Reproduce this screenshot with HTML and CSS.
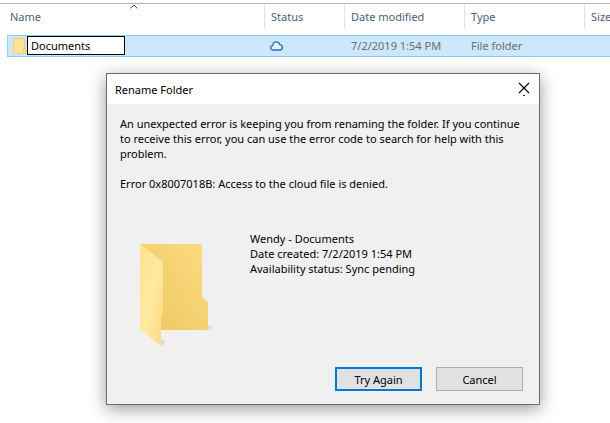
FILE: index.html
```html
<!DOCTYPE html>
<html lang="en">
<head>
    <meta charset="UTF-8">
    <meta name="viewport" content="width=device-width, initial-scale=1.0">
    <title>Rename Folder</title>
    <link rel="stylesheet" href="styles.css">
</head>
<body>
    <!-- File list -->
    <main class="explorer">
        <table class="file-list">
            <thead>
                <tr>
                    <th class="col-name">
                        <div class="heading">Name
                            <svg class="sort-arrow" width="8" height="5" viewBox="0 0 8 5"><path d="M0.5 4.5 L4 1 L7.5 4.5" fill="none" stroke="#555" stroke-width="1"/></svg>
                        </div>
                    </th>
                    <th class="col-status"><div class="heading">Status</div></th>
                    <th class="col-date"><div class="heading">Date modified</div></th>
                    <th class="col-type"><div class="heading">Type</div></th>
                    <th class="col-size"><div class="heading">Size</div></th>
                </tr>
            </thead>
            <tbody>
                <tr class="selected">
                    <td>
                        <div class="file-name">
                            <svg width="14" height="16" viewBox="0 0 14 16">
                                <path d="M1 0 H12 V10 L13 11 V15 H1 Z" fill="#ffe390"/>
                                <path d="M0.5 0.5 H11.5 V10 M0.5 0.5 V15.5 H12.5 V10.5 H10.5 V15" fill="none" stroke="#efcf78" stroke-width="1"/>
                            </svg>
                            <input type="text" class="rename-input" value="Documents" aria-label="Folder name">
                        </div>
                    </td>
                    <td>
                        <svg class="cloud" width="14" height="10" viewBox="0 0 14 10"><path d="M3.4 9 C1.7 9 0.7 8.1 0.7 6.8 C0.7 5.5 1.6 4.7 2.8 4.5 C3 2.3 4.3 0.8 6.3 0.8 C7.9 0.8 9.1 1.8 9.6 3.6 C11.3 3.7 12.3 4.8 12.3 6.3 C12.3 7.9 11.3 9 9.8 9 Z" fill="#e4f2ff" stroke="#1a6fc4" stroke-width="1.3"/></svg>
                    </td>
                    <td>7/2/2019 1:54 PM</td>
                    <td>File folder</td>
                    <td></td>
                </tr>
            </tbody>
        </table>
    </main>

    <!-- Error window -->
    <div class="dialog" role="dialog" aria-labelledby="dialogTitle">
        <header class="title-bar">
            <h1 id="dialogTitle">Rename Folder</h1>
            <button class="close" aria-label="Close">
                <svg width="12" height="15" viewBox="0 0 12 15">
                    <path d="M1 1 L11 11 M11 1 L1 11" fill="none" stroke="#000" stroke-width="1.1"/>
                    <rect x="5" y="13" width="2" height="1" fill="#222"/>
                </svg>
            </button>
        </header>
        <div class="dialog-body">
            <p>An unexpected error is keeping you from renaming the folder. If you continue to receive this error, you can use the error code to search for help with this problem.</p>
            <p>Error 0x8007018B: Access to the cloud file is denied.</p>
            <div class="details">
                <svg class="folder" width="74" height="104" viewBox="0 0 74 104">
                    <defs>
                        <linearGradient id="back" x1="0" y1="1" x2="1" y2="0">
                            <stop offset="0" stop-color="#edc761"/>
                            <stop offset="1" stop-color="#fbdc80"/>
                        </linearGradient>
                        <linearGradient id="front" x1="0" y1="0" x2="1" y2="1">
                            <stop offset="0" stop-color="#ffe28b"/>
                            <stop offset="0.5" stop-color="#ffe8a0"/>
                            <stop offset="1" stop-color="#fbda7c"/>
                        </linearGradient>
                        <filter id="soft"><feGaussianBlur stdDeviation="1"/></filter>
                    </defs>
                    <path d="M20 102 L25 98 L22 95 Z M66 86 L73 83 L68 82 Z" fill="#ccc" filter="url(#soft)"/>
                    <path d="M0 0 H62 V53 L68 58 V86 H18 Z" fill="url(#back)"/>
                    <path d="M0 0 L23 18 V70 L21 73 V102 L0 85 Z" fill="url(#front)"/>
                </svg>
                <div class="details-text">
                    <div>Wendy - Documents</div>
                    <div>Date created: 7/2/2019 1:54 PM</div>
                    <div>Availability status: Sync pending</div>
                </div>
            </div>
            <div class="buttons">
                <button class="button default">Try Again</button>
                <button class="button">Cancel</button>
            </div>
        </div>
    </div>
</body>
</html>
```
FILE: styles.css
```css
* {
    box-sizing: border-box;
}

body {
    font-family: "Noto Sans", "Open Sans", sans-serif;
    font-size: 11px;
    line-height: 15px;
    margin: 0;
    background-color: #fff;
    color: #000;
    overflow: hidden;
}

button,
input {
    font: inherit;
    color: inherit;
}

svg {
    display: block;
}

/* File list */
.explorer {
    margin-top: 3px;
    padding-left: 7px;
    border-top: 1px solid #b4b4b4;
}

.file-list {
    width: 100%;
    table-layout: fixed;
    border-collapse: separate;
    border-spacing: 0;
}

.col-name {
    width: 258px;
}

.col-status {
    width: 80px;
}

.col-date,
.col-type {
    width: 120px;
}

.file-list th {
    padding: 0 0 6px;
    font-weight: normal;
    text-align: left;
    color: #4c607a;
    white-space: nowrap;
}

.heading {
    position: relative;
    height: 25px;
    padding: 5px 0 5px 6px;
    border-right: 1px solid #e2e2e2;
}

.col-name .heading {
    padding-left: 3px;
}

.col-size .heading {
    border-right: none;
}

.sort-arrow {
    position: absolute;
    top: 0;
    left: 48%;
}

.file-list td {
    height: 22px;
    padding: 0 0 1px 6px;
    color: #6d6d6d;
}

.selected td {
    background-color: #cce8ff;
    border-top: 1px solid #99c9ef;
    border-bottom: 1px solid #99c9ef;
}

.selected td:first-child {
    border-left: 1px solid #99d1ff;
    padding-left: 5px;
}

.file-name {
    display: flex;
    align-items: center;
}

.rename-input {
    width: 98px;
    height: 19px;
    padding: 0 3px;
    border: 1px solid #000;
    border-radius: 0;
    background-color: #fff;
    color: #000;
    outline: none;
}

.cloud {
    margin-left: -1px;
}

/* Error window */
.dialog {
    position: absolute;
    top: 73px;
    left: 106px;
    width: 434px;
    border: 1px solid #6b6b6b;
    background-color: #f0f0f0;
    box-shadow: 0 4px 16px rgba(0, 0, 0, 0.4);
}

.title-bar {
    display: flex;
    align-items: center;
    justify-content: space-between;
    height: 30px;
    padding: 0 3px 0 8px;
    background-color: #fff;
}

.title-bar h1 {
    margin: 0;
    font-size: 11px;
    font-weight: normal;
}

.close {
    padding: 4px 6px;
    border: none;
    background: none;
}

.dialog-body {
    padding: 12px 10px 13px 13px;
}

.dialog-body p {
    margin: 0 0 15px;
}

.details {
    display: flex;
    padding: 38px 20px 0;
}

.details-text {
    margin: -13px 0 0 36px;
    white-space: nowrap;
}

.buttons {
    display: flex;
    justify-content: flex-end;
    gap: 14px;
    margin-top: 19px;
    padding-right: 6px;
}

.button {
    width: 87px;
    height: 24px;
    padding: 0;
    border: 1px solid #adadad;
    background-color: #e1e1e1;
}

.default {
    border: 2px solid #0078d7;
}
```
